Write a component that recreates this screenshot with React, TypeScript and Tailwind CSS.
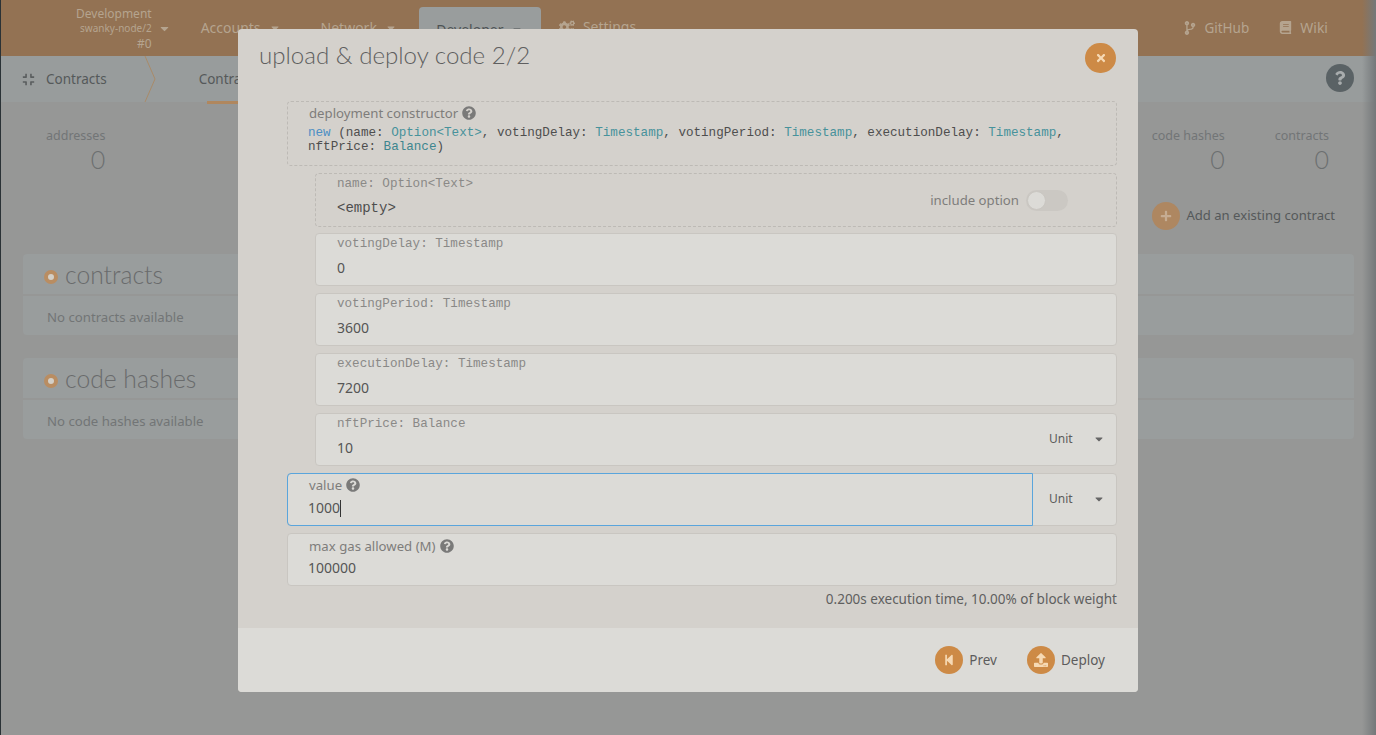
import { FaBook, FaCaretDown, FaCodeBranch, FaCogs, FaCompress, FaPlus, FaQuestion, FaQuestionCircle, FaStepBackward, FaTimes, FaUpload } from "react-icons/fa";

const mono = "font-['Liberation_Mono',monospace]";
const light = "font-['Lato',sans-serif] font-light";
const inputBox = "rounded-[4px] border border-[#c9c6c1] bg-[#dcdbd7]";

function Field({ label, value, unit }: { label: string; value: string; unit?: boolean }) {
  return (
    <div className={`ml-7 flex h-[53px] ${inputBox}`}>
      <div className="flex-1 pl-[21px]">
        <div className={`${mono} pt-[3px] text-[12.6px] leading-[15px] text-[#8a8987]`}>{label}</div>
        <div className="pt-[6px] text-[14px] leading-[20px] text-[#555]">{value}</div>
      </div>
      {unit && <UnitSelect />}
    </div>
  );
}

function UnitSelect() {
  return (
    <div className="flex w-[84px] items-center pb-[2px] pl-[17px] text-[12px] text-[#5c5c5c]">
      <span>Unit</span>
      <FaCaretDown className="ml-[20px] text-[12px] text-[#666]" />
    </div>
  );
}

function Stat({ label, className }: { label: string; className: string }) {
  return (
    <div className={`text-right ${className}`}>
      <div className="text-[12.5px] leading-[18px] text-[#727576]">{label}</div>
      <div className={`${light} mt-[1px] text-[25px] leading-[26px] text-[#6c6f70]`}>0</div>
    </div>
  );
}

function Section({ title, empty }: { title: string; empty: string }) {
  return (
    <div className="mb-[23px] flex flex-col gap-[2px]">
      <div className="flex h-[40px] items-center rounded-t-[4px] bg-[#999d9d] pl-[21px]">
        <span className="mt-[5px] h-[14px] w-[14px] rounded-full border-[4px] border-[#b98d62] bg-[#d3cfc7]" />
        <span className={`${light} ml-[7px] pt-[2px] text-[24.7px] text-[#696b6c]`}>{title}</span>
      </div>
      <div className="flex h-[39px] items-center rounded-b-[4px] bg-[#999d9d] pl-[24px] pt-[5px] text-[13.2px] text-[#727576]">{empty}</div>
    </div>
  );
}

function Background() {
  return (
    <div className="h-[735px] w-[1376px] overflow-hidden border-l border-[#2a3236] bg-[#969796] font-['Noto_Sans',sans-serif]">
      {/* top nav */}
      <div className="flex h-[56px] items-end bg-[#937253] text-[14px] text-[#b5a48f]">
        <div className="mb-[4px] ml-[75px] flex h-[48px] flex-col items-end justify-center text-right leading-[15px]">
          <span className="text-[12px]">Development</span>
          <span className="relative flex items-center text-[10px]">swanky-node/2<FaCaretDown className="absolute left-[78px] text-[13px]" /></span>
          <span className="text-[12px]">#0</span>
        </div>
        <div className="mb-[18px] ml-[49px] flex items-center">Accounts<FaCaretDown className="ml-2 text-[12px]" /></div>
        <div className="mb-[18px] ml-[40px] flex items-center">Network<FaCaretDown className="ml-2 text-[12px]" /></div>
        <div className="ml-[22px] flex h-[49px] w-[122px] items-center justify-center rounded-t-[4px] bg-[#999d9d] pb-1 text-[#4e5354]">Developer<FaCaretDown className="ml-2 text-[12px]" /></div>
        <div className="mb-[19px] ml-[18px] flex items-center gap-2"><FaCogs className="text-[16px]" />Settings</div>
        <div className="mb-[18px] ml-auto flex items-center gap-[7px] text-[13.5px]"><FaCodeBranch className="text-[14px]" />GitHub</div>
        <div className="mb-[18px] ml-[30px] mr-[48px] flex items-center gap-2"><FaBook className="text-[13px]" />Wiki</div>
      </div>
      {/* sub nav */}
      <div className="relative flex h-[46px] items-center bg-[#989c9c] text-[13.5px] text-[#55595a]">
        <FaCompress className="ml-[21px] text-[13px] text-[#5a5e5f]" />
        <span className="ml-[11px]">Contracts</span>
        <svg className="ml-[37px] h-[46px] w-[12px]" viewBox="0 0 12 46" fill="none">
          <path d="M1 0 L11 23 L1 46" stroke="#a98a69" strokeWidth="1" />
        </svg>
        <span className="ml-[43px]">Contracts</span>
        <span className="absolute bottom-[-2px] left-[206px] h-[3px] w-[40px] bg-[#b0875e]" />
        <div className="-mt-[2px] ml-auto mr-[22px] flex h-7 w-7 items-center justify-center rounded-full bg-[#5a6265]">
          <FaQuestion className="text-[14px] text-[#a8acad]" />
        </div>
      </div>
      {/* stats */}
      <div className="flex h-[152px] items-start pt-[25px]">
        <Stat label="addresses" className="ml-[45px] mr-[2px]" />
        <div className="ml-auto flex flex-col items-end">
          <div className="flex">
            <Stat label="code hashes" className="" />
            <Stat label="contracts" className="ml-[50px] mr-[47px]" />
          </div>
          <div className="mr-[41px] mt-[30px] flex items-center">
            <div className="flex h-7 w-7 items-center justify-center rounded-full bg-[#ae8761]">
              <FaPlus className="text-[12px] text-[#c6ac92]" />
            </div>
            <span className="ml-[6px] text-[13.1px] text-[#55595a]">Add an existing contract</span>
          </div>
        </div>
      </div>
      {/* tables */}
      <div className="mx-[22px]">
        <Section title="contracts" empty="No contracts available" />
        <Section title="code hashes" empty="No code hashes available" />
      </div>
    </div>
  );
}

function Hint() {
  return <FaQuestionCircle className="ml-[4px] text-[14px] text-[#7a7a79]" />;
}

export default function App() {
  return (
    <div className="relative h-[735px] w-[1376px] overflow-hidden">
      <Background />
      <div className="pointer-events-none absolute right-0 top-0 h-[735px] w-[14px] bg-gradient-to-r from-transparent to-[#74787a]" />
      {/* modal */}
      <div className="absolute left-[238px] top-[29px] flex h-[663px] w-[900px] flex-col rounded-[4px] bg-[#d4d1cc] font-['Noto_Sans',sans-serif]">
        <div className="flex h-[72px] items-start justify-between pl-[21px] pr-[22px] pt-[8px]">
          <h1 className={`${light} text-[24.1px] leading-[36px] text-[#5f5f5f]`}>upload &amp; deploy code 2/2</h1>
          <div className="mt-[6px] flex h-[30px] w-[31px] items-center justify-center rounded-full bg-[#cd8a46]">
            <FaTimes className="text-[12px] text-[#f6d9b4]" />
          </div>
        </div>
        <div className="flex flex-1 flex-col gap-[7px] pl-[49px] pr-[21px]">
          <div className="h-[65px] rounded-[4px] border border-dashed border-[#bdbab5] pl-[20px] pr-2">
            <div className="flex items-center pl-px pt-[1px] text-[13.2px] leading-[20px] text-[#7e7d7b]">deployment constructor<Hint /></div>
            <div className={`${mono} pt-[3px] text-[12.6px] leading-[14px] text-[#4e4e4e]`}>
              <span className="text-[#4d8fc4]">new</span> (name: <span className="text-[#47929b]">Option&lt;Text&gt;</span>, votingDelay: <span className="text-[#47929b]">Timestamp</span>, votingPeriod: <span className="text-[#47929b]">Timestamp</span>, executionDelay: <span className="text-[#47929b]">Timestamp</span>, nftPrice: <span className="text-[#3d868f]">Balance</span>)
            </div>
          </div>
          <div className="ml-7 flex h-[54px] items-start justify-between rounded-[4px] border border-dashed border-[#bdbab5] pl-[21px] pr-[48px]">
            <div className={mono}>
              <div className="pt-[3px] text-[12.6px] leading-[15px] text-[#8a8987]">name: Option&lt;Text&gt;</div>
              <div className="pt-[6px] text-[14px] leading-[20px] text-[#4e4e4e]">&lt;empty&gt;</div>
            </div>
            <div className="mt-[16px] flex items-center text-[13.2px] text-[#7e7d7b]">
              include option
              <div className="ml-[7px] flex h-[21px] w-[42px] items-center rounded-full bg-[#cbc8c3] pl-px">
                <span className="h-[19px] w-[19px] rounded-full border border-[#c9c6c1] bg-[#dcdbd7]" />
              </div>
            </div>
          </div>
          <div className="-mt-px flex flex-col gap-[7px]">
            <Field label="votingDelay: Timestamp" value="0" />
            <Field label="votingPeriod: Timestamp" value="3600" />
            <Field label="executionDelay: Timestamp" value="7200" />
            <Field label="nftPrice: Balance" value="10" unit />
          </div>
          <div className={`flex h-[53px] ${inputBox}`}>
            <div className="-m-px flex-1 rounded-l-[4px] border border-[#5aa5dc] pl-[20px]">
              <div className="flex items-center pl-px pt-[2px] text-[13.2px] leading-[18px] text-[#7e7d7b]">value<Hint /></div>
              <div className="flex items-center pt-[4px] text-[14px] leading-[20px] text-[#555]">1000<span className="h-[17px] w-px bg-[#333]" /></div>
            </div>
            <UnitSelect />
          </div>
          <div className={`h-[53px] pl-[20px] ${inputBox}`}>
            <div className="flex items-center pl-px pt-[3px] text-[13.2px] leading-[18px] text-[#7e7d7b]">max gas allowed (M)<Hint /></div>
            <div className="pt-[3px] text-[14px] leading-[20px] text-[#555]">100000</div>
          </div>
          <div className="-mt-[4px] text-right text-[13.5px] leading-[20px] text-[#5f5f5f]">0.200s execution time, 10.00% of block weight</div>
        </div>
        <div className="flex h-[64px] items-center justify-end rounded-b-[4px] bg-[#dcdbd7] pr-[33px] text-[13.5px] text-[#5c5c5c]">
          <div className="flex h-7 w-7 items-center justify-center rounded-full bg-[#cd8a46]">
            <FaStepBackward className="text-[12px] text-[#f6d9b4]" />
          </div>
          <span className="ml-[6px]">Prev</span>
          <div className="ml-[30px] flex h-7 w-7 items-center justify-center rounded-full bg-[#cd8a46]">
            <FaUpload className="text-[14px] text-[#f6d9b4]" />
          </div>
          <span className="ml-[6px]">Deploy</span>
        </div>
      </div>
    </div>
  );
}
